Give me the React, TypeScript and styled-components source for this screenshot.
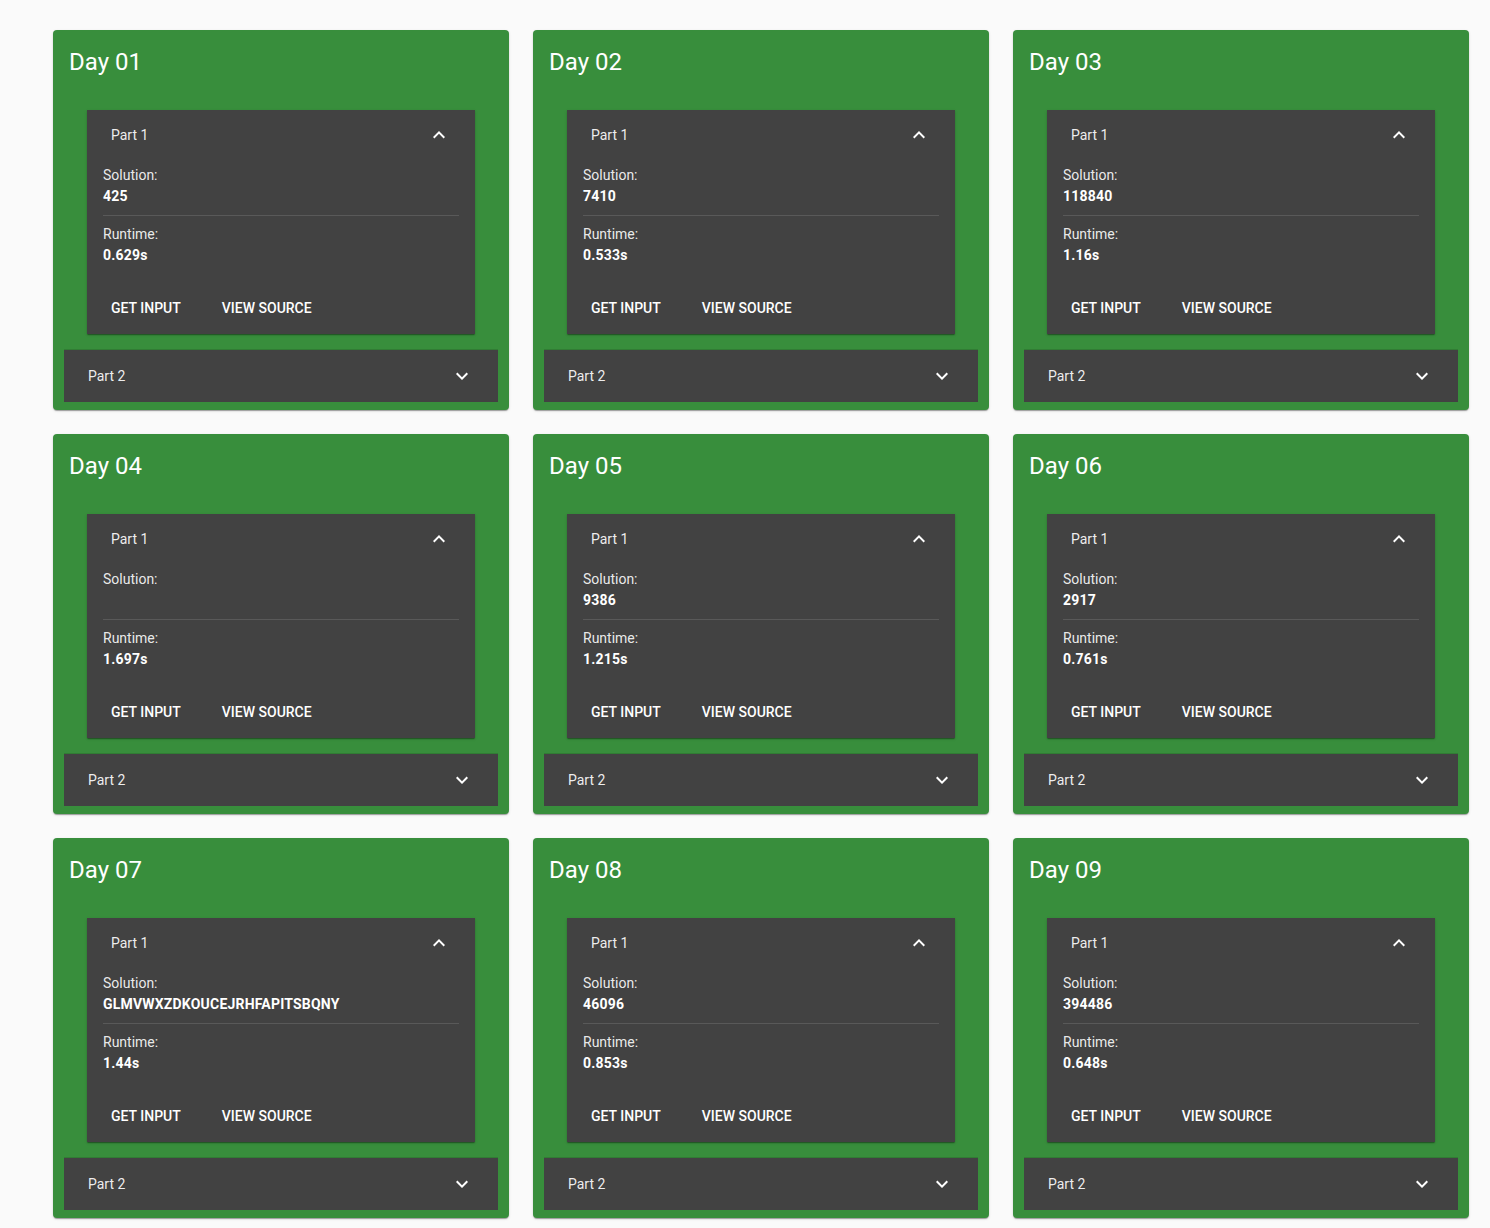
import styled, { createGlobalStyle } from 'styled-components';

const GlobalStyle = createGlobalStyle`
  body {
    margin: 0;
    background-color: #fafafa;
    font-family: Roboto, "Liberation Sans", sans-serif;
  }
`;

const Grid = styled.div`
  display: grid;
  grid-template-columns: repeat(3, 456px);
  gap: 24px;
  padding: 30px 0 24px 53px;
`;

const Card = styled.div`
  background-color: #388e3c;
  border-radius: 4px;
  box-shadow: 0 2px 1px -1px rgba(0, 0, 0, 0.2), 0 1px 1px 0 rgba(0, 0, 0, 0.14),
    0 1px 3px 0 rgba(0, 0, 0, 0.12);
  padding: 16px 11px 8px;
`;

const Title = styled.h2`
  margin: 0 5px;
  font-size: 24px;
  font-weight: 400;
  line-height: 32px;
  color: #fff;
`;

const Panel = styled.div<{ $open?: boolean }>`
  background-color: #424242;
  color: #fff;
  margin: ${(p) => (p.$open ? '32px 23px 16px' : '0')};
  box-shadow: ${(p) =>
    p.$open
      ? '0 2px 1px -1px rgba(0,0,0,0.2), 0 1px 1px 0 rgba(0,0,0,0.14), 0 1px 3px 0 rgba(0,0,0,0.12)'
      : '0 -1px 0 rgba(0,0,0,0.12)'};
`;

const Summary = styled.div<{ $tall?: boolean }>`
  display: flex;
  align-items: center;
  justify-content: space-between;
  height: ${(p) => (p.$tall ? '52px' : '48px')};
  padding: ${(p) => (p.$tall ? '0 24px' : '2px 24px 0')};
  box-sizing: border-box;
  font-size: 14px;
  color: rgba(255, 255, 255, 0.92);
`;

const Chevron = styled.svg<{ $up?: boolean }>`
  width: 24px;
  height: 24px;
  fill: #fff;
  transform: ${(p) => (p.$up ? 'rotate(180deg)' : 'none')};
`;

const Details = styled.div`
  padding: 7px 16px 16px;
`;

const Label = styled.div`
  font-size: 14px;
  line-height: 21px;
  color: rgba(255, 255, 255, 0.9);
`;

const Value = styled.div`
  font-size: 14px;
  line-height: 21px;
  min-height: 21px;
  font-weight: 700;
  letter-spacing: 0.2px;
  color: #fff;
`;

const Divider = styled.hr`
  border: none;
  height: 1px;
  background-color: rgba(255, 255, 255, 0.12);
  margin: 8px 0;
`;

const Actions = styled.div`
  display: flex;
  gap: 25px;
  padding: 8px 16px;
`;

const Button = styled.button`
  background: none;
  border: none;
  color: #fff;
  font-family: Roboto, "Liberation Sans", sans-serif;
  font-size: 14px;
  font-weight: 500;
  letter-spacing: 0;
  line-height: 24px;
  text-transform: uppercase;
  padding: 6px 8px;
  min-width: 64px;
  border-radius: 4px;
  cursor: pointer;
`;

const ExpandIcon = ({ up }: { up?: boolean }) => (
  <Chevron $up={up} viewBox="0 0 24 24">
    <path d="M16.59 8.59L12 13.17 7.41 8.59 6 10l6 6 6-6z" />
  </Chevron>
);

const days = [
  { day: '01', solution: '425', runtime: '0.629s' },
  { day: '02', solution: '7410', runtime: '0.533s' },
  { day: '03', solution: '118840', runtime: '1.16s' },
  { day: '04', solution: '', runtime: '1.697s' },
  { day: '05', solution: '9386', runtime: '1.215s' },
  { day: '06', solution: '2917', runtime: '0.761s' },
  { day: '07', solution: 'GLMVWXZDKOUCEJRHFAPITSBQNY', runtime: '1.44s' },
  { day: '08', solution: '46096', runtime: '0.853s' },
  { day: '09', solution: '394486', runtime: '0.648s' },
];

const App = () => {
  return (
    <>
      <GlobalStyle />
      <Grid>
        {days.map((d) => (
          <Card key={d.day}>
            <Title>Day {d.day}</Title>
            <Panel $open>
              <Summary>
                <span>Part 1</span>
                <ExpandIcon up />
              </Summary>
              <Details>
                <Label>Solution:</Label>
                <Value>{d.solution}</Value>
                <Divider />
                <Label>Runtime:</Label>
                <Value>{d.runtime}</Value>
              </Details>
              <Actions>
                <Button>Get Input</Button>
                <Button>View Source</Button>
              </Actions>
            </Panel>
            <Panel>
              <Summary $tall>
                <span>Part 2</span>
                <ExpandIcon />
              </Summary>
            </Panel>
          </Card>
        ))}
      </Grid>
    </>
  );
};

export default App;
